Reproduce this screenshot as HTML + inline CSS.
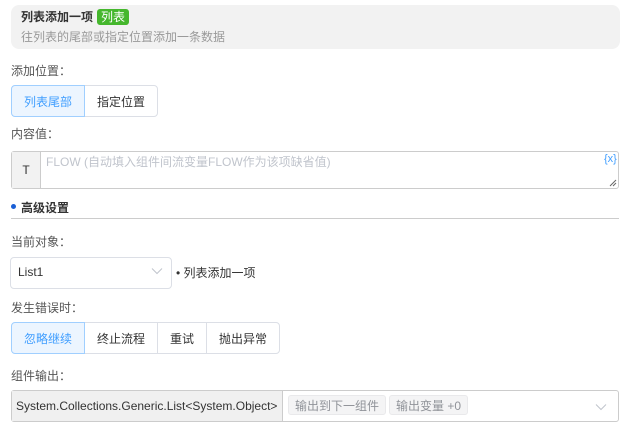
<!DOCTYPE html>
<html><head><meta charset="utf-8"><style>
*{box-sizing:border-box;margin:0;padding:0}
body{width:630px;height:432px;background:#fff;font-family:"Liberation Sans","Noto Sans CJK SC",sans-serif;font-size:12px;color:#333;position:relative;overflow:hidden}
.a{position:absolute}
.hdr{left:11px;top:5px;width:609px;height:44px;background:#f2f2f2;border-radius:8px}
.lbl{color:#555;font-size:12px}
.btn{position:absolute;height:32px;border:1px solid #dcdfe6;display:flex;align-items:center;justify-content:center;font-size:12px;color:#333;background:#fff}
.on{background:#ecf5ff;border-color:#a0cfff;color:#409eff;z-index:1}
.tag{position:absolute;height:20px;background:#f4f4f5;border:1px solid #e9e9eb;border-radius:3px;color:#909399;font-size:12px;display:flex;align-items:center;padding:0 6px;top:395px}
</style></head><body>
<div class="a hdr"></div>
<div class="a" style="left:21px;top:9px;font-weight:bold;font-size:12px;color:#333;line-height:16px">列表添加一项</div>
<div class="a" style="left:97px;top:9px;width:32px;height:16px;background:#45b72d;border-radius:3px;color:#fff;font-size:12px;line-height:16px;text-align:center">列表</div>
<div class="a" style="left:21px;top:29px;color:#999;font-size:12px;line-height:16px">往列表的尾部或指定位置添加一条数据</div>

<div class="a lbl" style="left:11px;top:62px">添加位置：</div>
<div class="btn on" style="left:11px;top:85px;width:74px;border-radius:4px 0 0 4px">列表尾部</div>
<div class="btn" style="left:84px;top:85px;width:74px;border-radius:0 4px 4px 0">指定位置</div>

<div class="a lbl" style="left:11px;top:125px">内容值：</div>
<div class="a" style="left:11px;top:151px;width:608px;height:38px;border:1px solid #ccc;border-radius:3px"></div>
<div class="a" style="left:12px;top:152px;width:29px;height:36px;background:#f2f2f2;border-right:1px solid #ccc;text-align:center;line-height:36px;color:#333">T</div>
<div class="a" style="left:46px;top:153px;color:#c0c4cc;font-size:12px">FLOW (自动填入组件间流变量FLOW作为该项缺省值)</div>
<div class="a" style="left:604px;top:153px;color:#409eff;font-size:11px">{x}</div>
<svg class="a" style="left:609px;top:179px" width="8" height="8"><path d="M1 7L7 1M4 7L7 4" stroke="#666" stroke-width="1"/></svg>

<div class="a" style="left:11px;top:204px;width:5px;height:5px;border-radius:50%;background:#1a5fd6"></div>
<div class="a" style="left:21px;top:199px;font-weight:bold;font-size:12px;color:#333">高级设置</div>
<div class="a" style="left:11px;top:218px;width:608px;height:1px;background:#ccc"></div>

<div class="a lbl" style="left:11px;top:233px">当前对象：</div>
<div class="a" style="left:10px;top:257px;width:162px;height:32px;border:1px solid #dcdfe6;border-radius:4px"></div>
<div class="a" style="left:18px;top:265px;color:#333">List1</div>
<svg class="a" style="left:151px;top:267px" width="12" height="8"><path d="M1 1.5L6 6.5L11 1.5" fill="none" stroke="#c0c4cc" stroke-width="1"/></svg>
<div class="a" style="left:176px;top:264px;color:#333">• 列表添加一项</div>

<div class="a lbl" style="left:11px;top:299px">发生错误时：</div>
<div class="btn on" style="left:11px;top:322px;width:74px;border-radius:4px 0 0 4px">忽略继续</div>
<div class="btn" style="left:84px;top:322px;width:74px">终止流程</div>
<div class="btn" style="left:157px;top:322px;width:50px">重试</div>
<div class="btn" style="left:206px;top:322px;width:74px;border-radius:0 4px 4px 0">抛出异常</div>

<div class="a lbl" style="left:11px;top:367px">组件输出：</div>
<div class="a" style="left:11px;top:390px;width:608px;height:32px;border:1px solid #ccc;border-radius:3px"></div>
<div class="a" style="left:12px;top:391px;width:271px;height:30px;background:#f0f0f0;border-right:1px solid #ccc;line-height:30px;padding-left:4px;font-size:12px;color:#333;white-space:nowrap">System.Collections.Generic.List&lt;System.Object&gt;</div>
<div class="tag" style="left:288px">输出到下一组件</div>
<div class="tag" style="left:389px">输出变量 +0</div>
<svg class="a" style="left:595px;top:403px" width="12" height="8"><path d="M1 1.5L6 6.5L11 1.5" fill="none" stroke="#c0c4cc" stroke-width="1"/></svg>
</body></html>
